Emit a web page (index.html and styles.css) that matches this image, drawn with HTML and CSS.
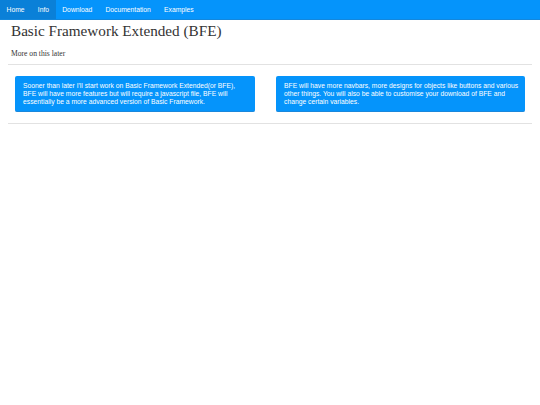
FILE: index.html
```html
<!DOCTYPE html>
<html>
<head>
<meta charset="utf-8">
<link rel="stylesheet" href="styles.css">
</head>
<body>
<nav class="navbar">
  <a class="nav-item active" href="#">Home</a>
  <a class="nav-item active" href="#">Info</a>
  <a class="nav-item" href="#">Download</a>
  <a class="nav-item" href="#">Documentation</a>
  <a class="nav-item" href="#">Examples</a>
</nav>
<main class="content">
  <h1 class="title">Basic Framework Extended (BFE)</h1>
  <p class="lead">More on this later</p>
  <hr class="rule">
  <div class="boxes">
    <div class="box">Sooner than later I'll start work on Basic Framework Extended(or BFE), BFE will have more features but will require a javascript file, BFE will essentially be a more advanced version of Basic Framework.</div>
    <div class="box">BFE will have more navbars, more designs for objects like buttons and various other things. You will also be able to customise your download of BFE and change certain variables.</div>
  </div>
  <hr class="rule">
</main>
</body>
</html>
```
FILE: styles.css
```css
html, body {
  margin: 0;
  padding: 0;
  background: #ffffff;
}
.navbar {
  display: flex;
  height: 19px;
  background: #0594fb;
  border-bottom: 1px solid #1487dc;
  font-family: "Liberation Sans", Arial, sans-serif;
  font-size: 6.75px;
}
.nav-item {
  display: flex;
  align-items: center;
  padding: 0 6.6px;
  color: #ffffff;
  text-decoration: none;
}
.nav-item.active {
  background: #0a80d8;
}
.content {
  margin: 0 8px;
}
.title {
  font-family: "Liberation Serif", "Times New Roman", serif;
  font-weight: normal;
  font-size: 15.2px;
  color: #333333;
  margin: 0;
  padding: 2px 0 0 3px;
  line-height: 18px;
}
.lead {
  font-family: "Liberation Serif", "Times New Roman", serif;
  font-size: 7.6px;
  color: #333333;
  margin: 9px 0 0 3px;
  line-height: 10px;
}
.rule {
  border: 0;
  border-top: 1px solid #e2e2e2;
  margin: 5px 0 0 0;
  height: 0;
}
.boxes {
  display: grid;
  grid-template-columns: 240px 249px;
  column-gap: 21px;
  padding: 11px 0 0 7px;
}
.box {
  background: #0594fb;
  color: #ffffff;
  border-radius: 2px;
  padding: 6px 5px 5px 8px;
  font-family: "Liberation Sans", Arial, sans-serif;
  font-size: 6.75px;
  line-height: 8px;
  border-bottom: 1px solid #1a88dc;
}
.boxes + .rule {
  margin-top: 11px;
}
```
